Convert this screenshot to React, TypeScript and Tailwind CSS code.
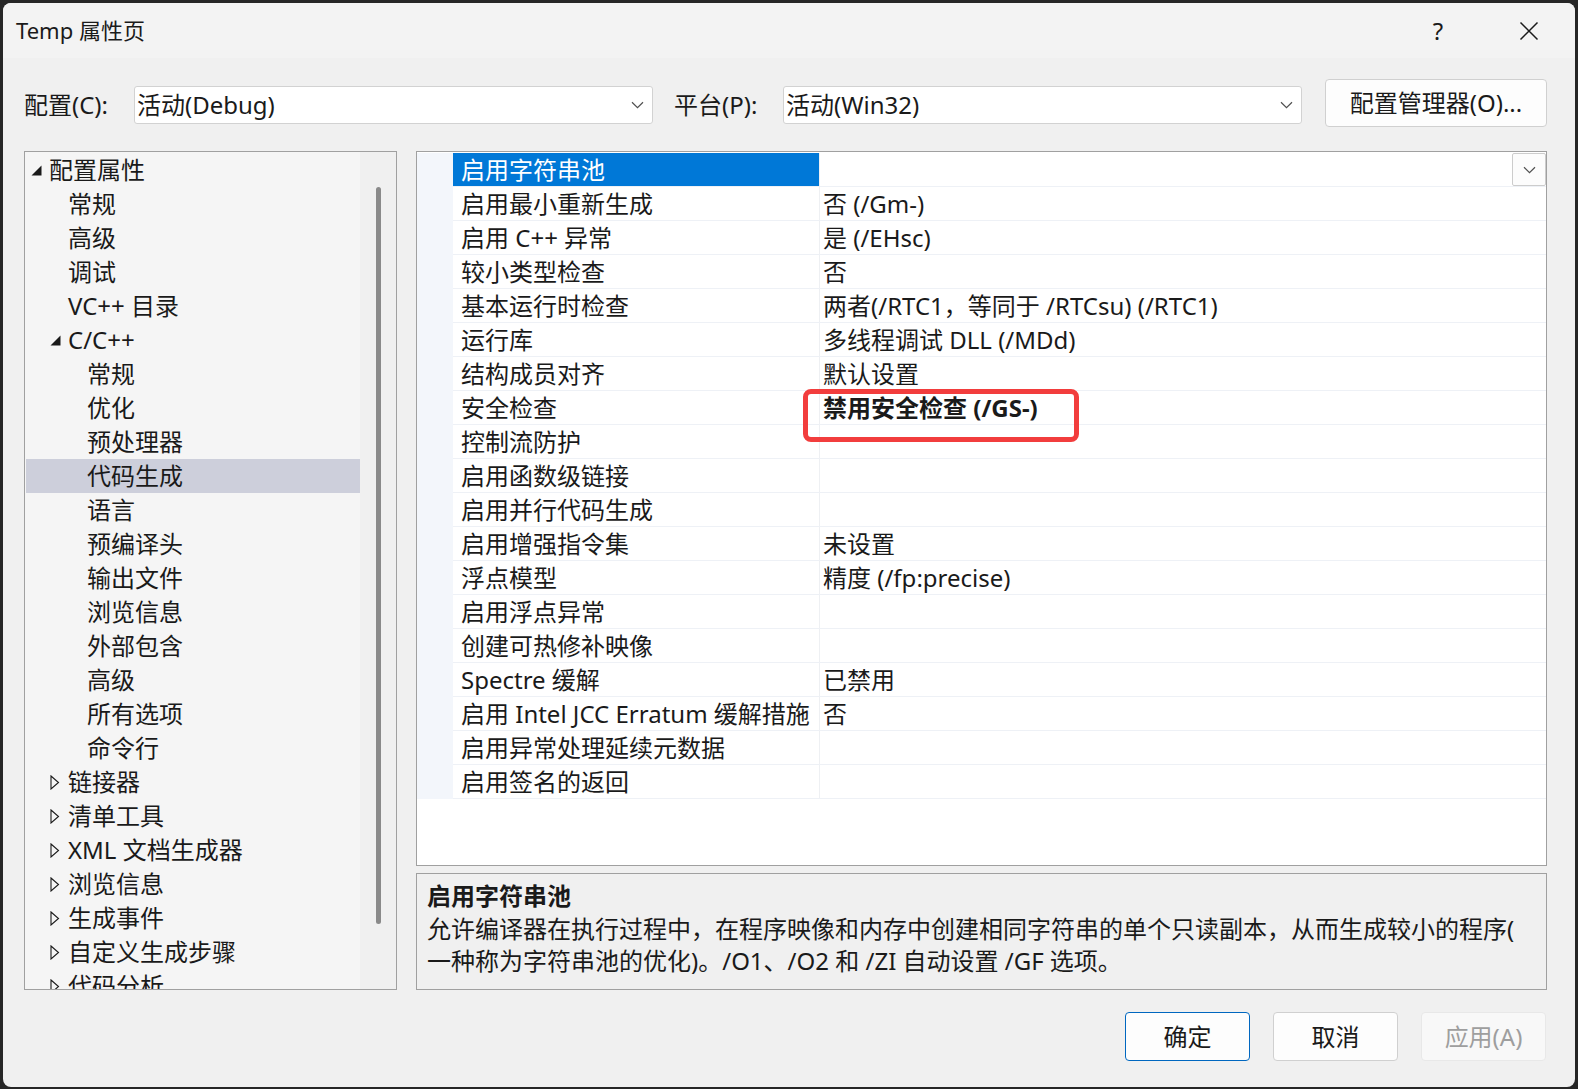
import React from "react";

type TreeItem = { label: string; level: number; toggle?: "open" | "closed"; selected?: boolean };

const treeItems: TreeItem[] = [
  { label: "配置属性", level: 0, toggle: "open" },
  { label: "常规", level: 1 },
  { label: "高级", level: 1 },
  { label: "调试", level: 1 },
  { label: "VC++ 目录", level: 1 },
  { label: "C/C++", level: 1, toggle: "open" },
  { label: "常规", level: 2 },
  { label: "优化", level: 2 },
  { label: "预处理器", level: 2 },
  { label: "代码生成", level: 2, selected: true },
  { label: "语言", level: 2 },
  { label: "预编译头", level: 2 },
  { label: "输出文件", level: 2 },
  { label: "浏览信息", level: 2 },
  { label: "外部包含", level: 2 },
  { label: "高级", level: 2 },
  { label: "所有选项", level: 2 },
  { label: "命令行", level: 2 },
  { label: "链接器", level: 1, toggle: "closed" },
  { label: "清单工具", level: 1, toggle: "closed" },
  { label: "XML 文档生成器", level: 1, toggle: "closed" },
  { label: "浏览信息", level: 1, toggle: "closed" },
  { label: "生成事件", level: 1, toggle: "closed" },
  { label: "自定义生成步骤", level: 1, toggle: "closed" },
  { label: "代码分析", level: 1, toggle: "closed" },
];

const props: { name: string; value: string; bold?: boolean }[] = [
  { name: "启用字符串池", value: "" },
  { name: "启用最小重新生成", value: "否 (/Gm-)" },
  { name: "启用 C++ 异常", value: "是 (/EHsc)" },
  { name: "较小类型检查", value: "否" },
  { name: "基本运行时检查", value: "两者(/RTC1，等同于 /RTCsu) (/RTC1)" },
  { name: "运行库", value: "多线程调试 DLL (/MDd)" },
  { name: "结构成员对齐", value: "默认设置" },
  { name: "安全检查", value: "禁用安全检查 (/GS-)", bold: true },
  { name: "控制流防护", value: "" },
  { name: "启用函数级链接", value: "" },
  { name: "启用并行代码生成", value: "" },
  { name: "启用增强指令集", value: "未设置" },
  { name: "浮点模型", value: "精度 (/fp:precise)" },
  { name: "启用浮点异常", value: "" },
  { name: "创建可热修补映像", value: "" },
  { name: "Spectre 缓解", value: "已禁用" },
  { name: "启用 Intel JCC Erratum 缓解措施", value: "否" },
  { name: "启用异常处理延续元数据", value: "" },
  { name: "启用签名的返回", value: "" },
];

function Chevron() {
  return (
    <svg width="13" height="8" viewBox="0 0 13 8" className="shrink-0">
      <path d="M1 1.2 L6.5 6.6 L12 1.2" fill="none" stroke="#505050" strokeWidth="1.2" />
    </svg>
  );
}

function Dropdown({ text }: { text: string }) {
  return (
    <div className="w-[519px] h-[38px] mt-[7px] bg-white border border-[#d2d2d2] rounded-[3px] flex items-center pl-[2px] pr-[8px]">
      <span className="flex-1 leading-[36px]">{text}</span>
      <Chevron />
    </div>
  );
}

function Toggle({ kind }: { kind: "open" | "closed" }) {
  if (kind === "open") {
    return (
      <svg width="11" height="11" viewBox="0 0 11 11">
        <polygon points="10.5,0.5 10.5,10.5 0.5,10.5" fill="#1a1a1a" />
      </svg>
    );
  }
  return (
    <svg width="10" height="15" viewBox="0 0 10 15">
      <polygon points="1,1 8.5,7.5 1,14" fill="none" stroke="#1a1a1a" strokeWidth="1.1" />
    </svg>
  );
}

function TreeRow({ item }: { item: TreeItem }) {
  const indent = ["pl-[5px]", "pl-[24px]", "pl-[43px]"][item.level];
  return (
    <div className={`h-[34px] flex items-center ${indent} ${item.selected ? "bg-[#cdcfdb]" : ""}`}>
      <span className="w-[18px] shrink-0 flex items-center">{item.toggle && <Toggle kind={item.toggle} />}</span>
      <span className="whitespace-nowrap leading-[34px]">{item.label}</span>
    </div>
  );
}

function Button({ label, kind }: { label: string; kind: "default" | "normal" | "disabled" }) {
  const styles = {
    default: "border-[#0067c0] bg-[#fdfdfd] text-[#1a1a1a]",
    normal: "border-[#d0d0d0] bg-[#fdfdfd] text-[#1a1a1a]",
    disabled: "border-[#e8e8e8] bg-[#f8f8f8] text-[#9e9e9e]",
  }[kind];
  return (
    <div className={`w-[125px] h-[49px] border rounded-[4px] flex items-center justify-center ${styles}`}>{label}</div>
  );
}

export default function App() {
  return (
    <div className="w-[1578px] h-[1089px] bg-[#262626] pt-[3px] pl-[3px] overflow-hidden font-['Noto_Sans','Noto_Sans_CJK_SC',sans-serif] text-[24px] text-[#1a1a1a]">
      <div className="w-[1572px] h-[1084px] bg-[#f0f0f0] rounded-[8px] overflow-hidden flex flex-col">
        {/* title bar */}
        <div className="h-[55px] bg-[#f3f3f3] flex items-center pl-[13px] pr-[26px]">
          <div className="flex-1 text-[22px]">Temp 属性页</div>
          <div className="w-[40px] flex justify-center text-[24px]">?</div>
          <div className="w-[40px] ml-[51px] flex justify-center">
            <svg width="20" height="20" viewBox="0 0 20 20">
              <path d="M1.5 1.5 L18.5 18.5 M18.5 1.5 L1.5 18.5" stroke="#1a1a1a" strokeWidth="1.5" />
            </svg>
          </div>
        </div>

        {/* configuration row */}
        <div className="mt-[21px] h-[48px] flex items-start pl-[21px]">
          <div className="w-[110px] h-[52px] flex items-center">配置(C):</div>
          <Dropdown text="活动(Debug)" />
          <div className="w-[109px] ml-[21px] h-[52px] flex items-center">平台(P):</div>
          <Dropdown text="活动(Win32)" />
          <div className="ml-[23px] w-[222px] h-[48px] bg-[#fdfdfd] border border-[#d0d0d0] rounded-[4px] flex items-center justify-center">
            配置管理器(O)...
          </div>
        </div>

        {/* panels */}
        <div className="mt-[24px] h-[839px] flex pl-[21px]">
          <div className="w-[373px] h-full border border-[#a0a0a0] bg-[#f5f5f5] flex overflow-hidden">
            <div className="flex-1 pt-[1px] pl-[1px]">
              {treeItems.map((item, i) => (
                <TreeRow key={i} item={item} />
              ))}
            </div>
            <div className="w-[36px] bg-[#f0f0f0] pt-[35px] pb-[65px] flex justify-center">
              <div className="w-[5px] h-full bg-[#8a8a8a] rounded-full" />
            </div>
          </div>

          <div className="ml-[19px] w-[1131px] flex flex-col">
            <div className="h-[715px] border border-[#a0a0a0] bg-white relative pt-[1px]">
              {props.map((p, i) => {
                const sel = i === 0;
                return (
                  <div key={i} className="h-[34px] flex">
                    <div className="w-[36px] bg-[#f3f6fb]" />
                    <div className="flex-1 flex border-b border-[#eef1f6]">
                      <div
                        className={`w-[367px] border-r border-[#eef0f3] pl-[8px] whitespace-nowrap leading-[33px] ${
                          sel ? "bg-[#0078d7] text-white" : ""
                        }`}
                      >
                        {p.name}
                      </div>
                      <div className={`flex-1 flex pl-[3px] whitespace-nowrap leading-[33px] ${p.bold ? "font-bold" : ""}`}>
                        <span className="flex-1">{p.value}</span>
                        {sel && (
                          <div className="w-[34px] h-[33px] border border-[#cccccc] bg-[#fcfcfc] rounded-[2px] flex items-center justify-center">
                            <Chevron />
                          </div>
                        )}
                      </div>
                    </div>
                  </div>
                );
              })}
              <div className="absolute left-[386px] top-[237px] w-[276px] h-[53px] border-[5px] border-[#f23d3d] rounded-[8px]" />
            </div>

            <div className="mt-[7px] h-[117px] border border-[#a0a0a0] bg-[#f0f0f0] pl-[10px] pt-[5px] whitespace-nowrap">
              <div className="font-bold leading-[34px]">启用字符串池</div>
              <div className="leading-[32px]">
                允许编译器在执行过程中，在程序映像和内存中创建相同字符串的单个只读副本，从而生成较小的程序(
                <br />
                一种称为字符串池的优化)。/O1、/O2 和 /ZI 自动设置 /GF 选项。
              </div>
            </div>
          </div>
        </div>

        {/* buttons */}
        <div className="mt-[22px] flex pl-[1122px] gap-[23px]">
          <Button label="确定" kind="default" />
          <Button label="取消" kind="normal" />
          <Button label="应用(A)" kind="disabled" />
        </div>
      </div>
    </div>
  );
}
